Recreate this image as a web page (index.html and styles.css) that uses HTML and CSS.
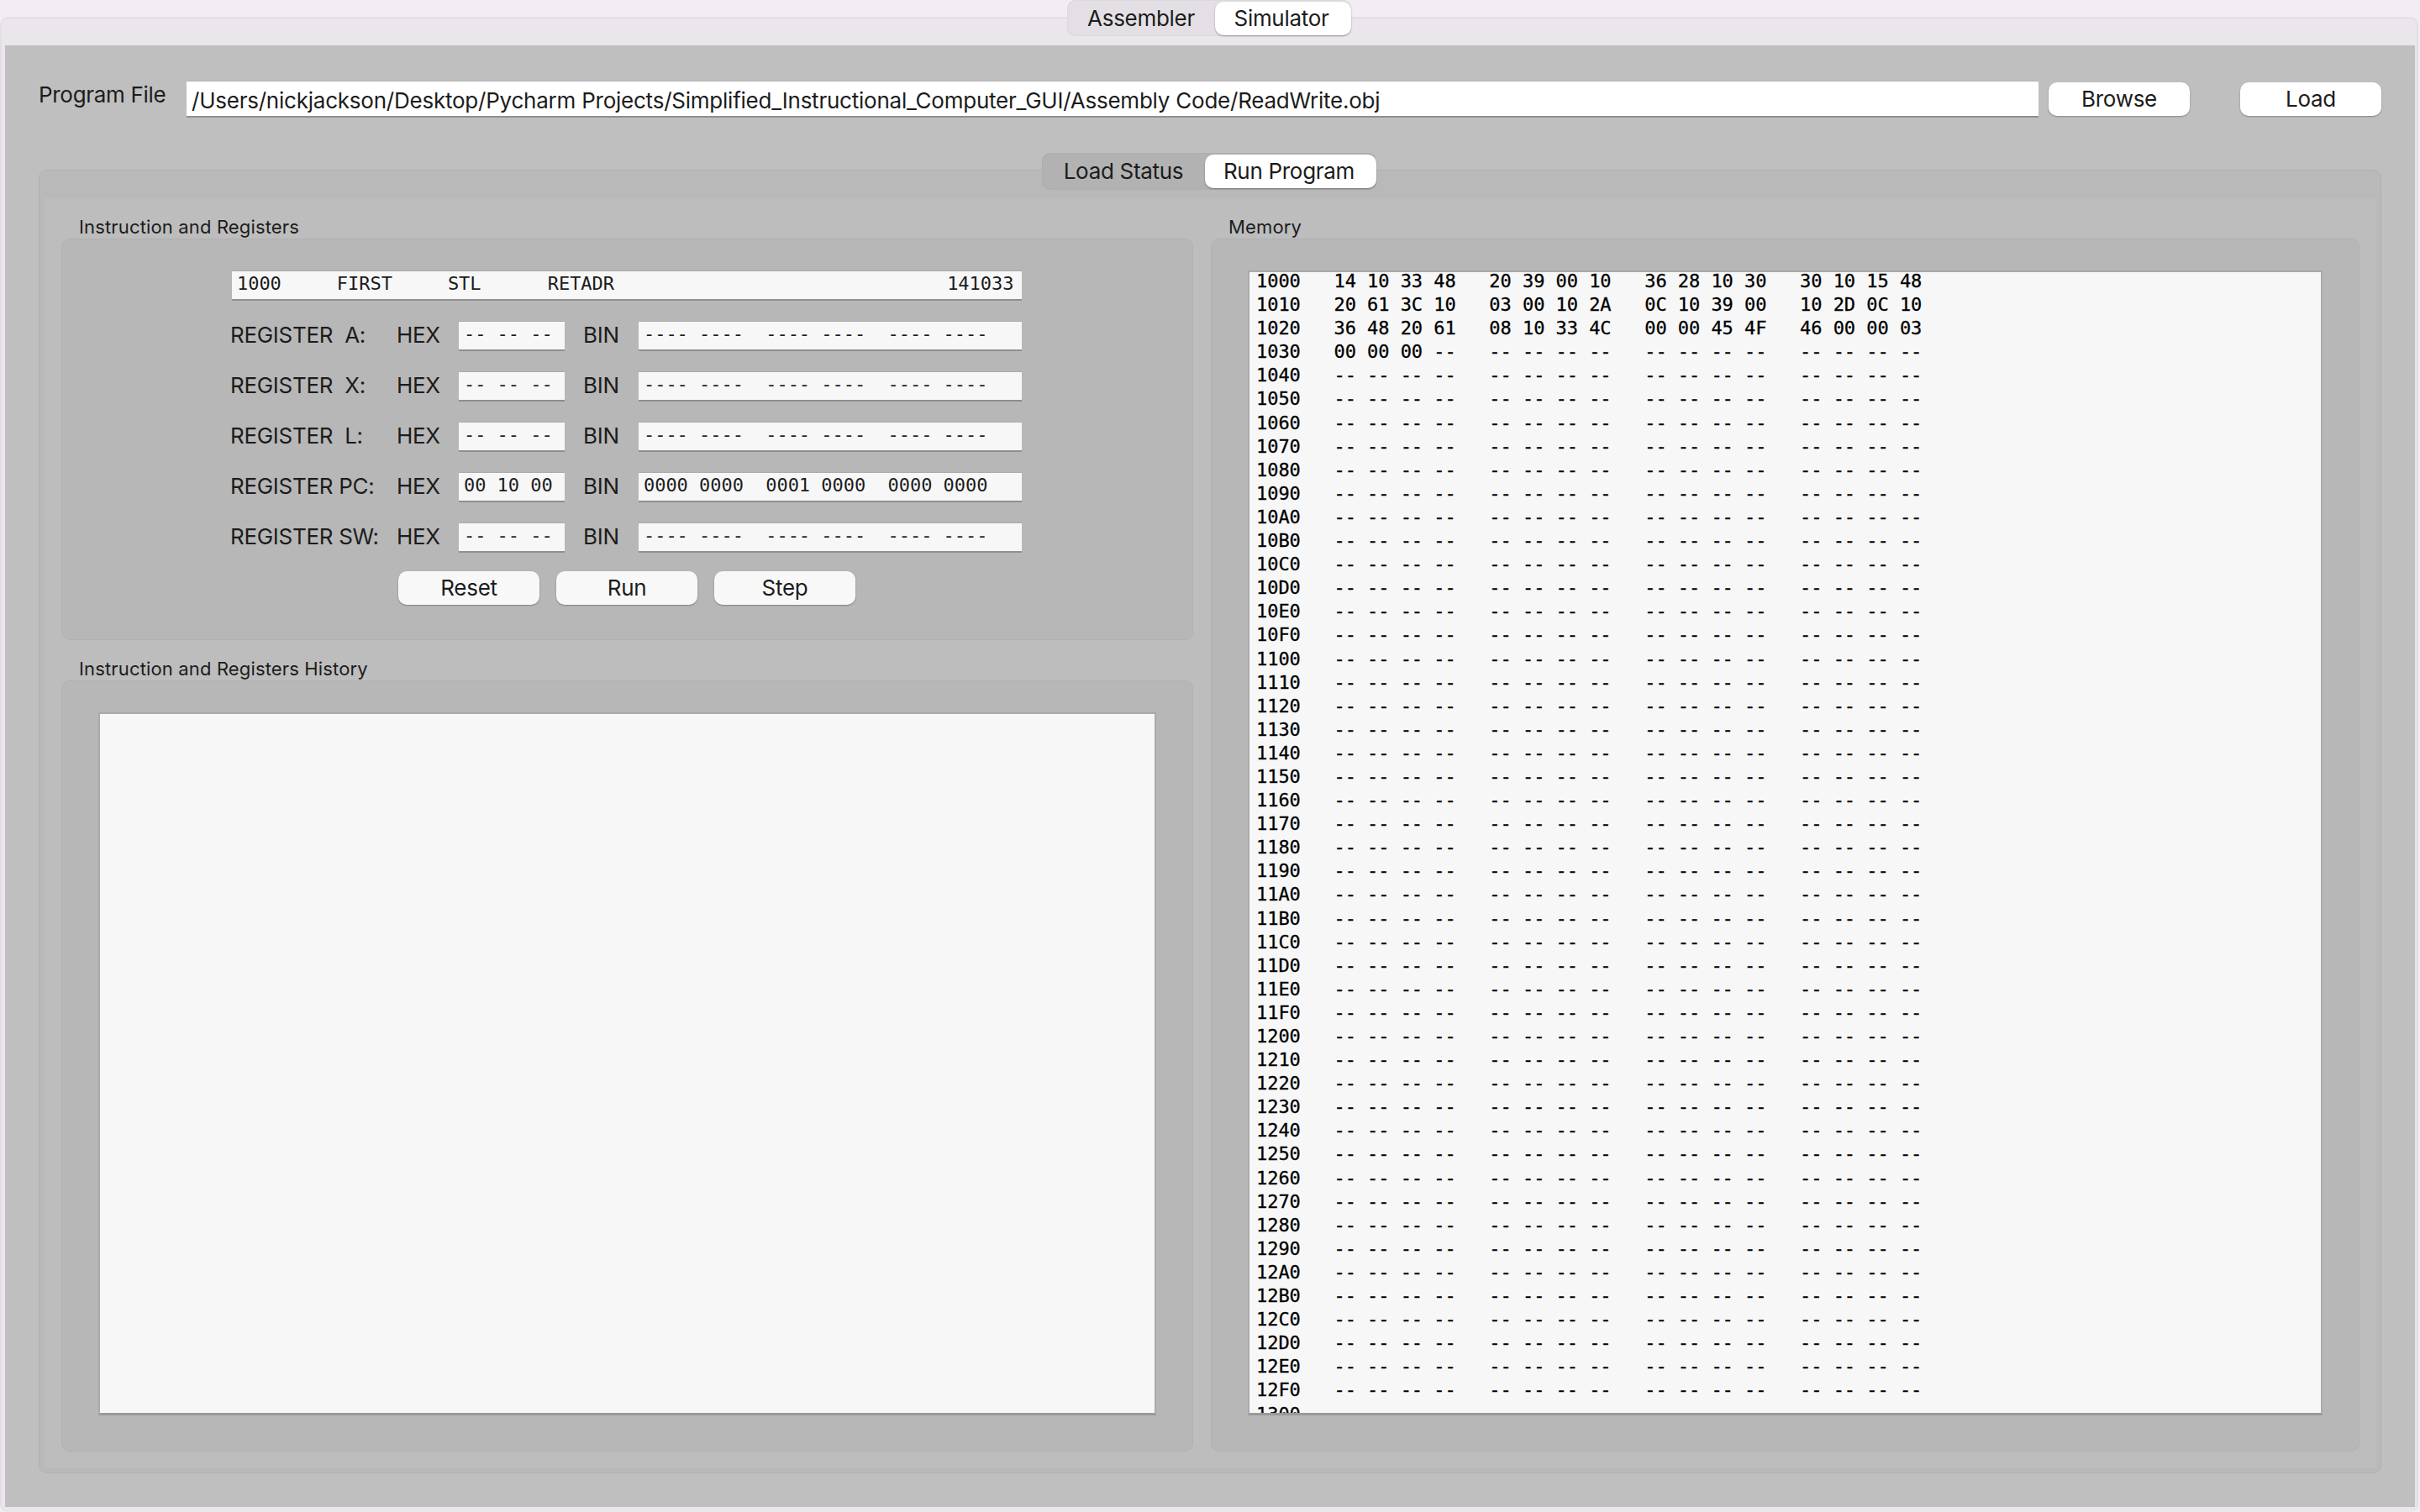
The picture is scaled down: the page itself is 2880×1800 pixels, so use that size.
FILE: index.html
```html
<!DOCTYPE html>
<html lang="en">
<head>
  <meta charset="UTF-8">
  <title>Simplified Instructional Computer</title>
  <link rel="stylesheet" href="styles.css">
</head>
<body>
  <div class="tabs top-tabs">
    <span class="tab">Assembler</span>
    <span class="tab active">Simulator</span>
  </div>
  <div class="frame">
    <div class="pane">
      <div class="file-row">
        <span class="file-label">Program File</span>
        <div class="file-input">/Users/nickjackson/Desktop/Pycharm Projects/Simplified_Instructional_Computer_GUI/Assembly Code/ReadWrite.obj</div>
        <button class="btn browse">Browse</button>
        <button class="btn load">Load</button>
      </div>

      <div class="tabs inner-tabs">
        <span class="tab">Load Status</span>
        <span class="tab active">Run Program</span>
      </div>
      <div class="inner-frame">
        <div class="content">
          <div class="left-col">
            <div class="section-label">Instruction and Registers</div>
            <div class="group registers">
              <div class="reg-inner">
                <div class="field instr">1000     FIRST     STL      RETADR                              141033</div>
                <div class="reg-row">
                  <span class="reg-name">REGISTER  A:</span><span class="reg-unit">HEX</span>
                  <div class="field">-- -- --</div><span class="reg-unit bin">BIN</span>
                  <div class="field">---- ----  ---- ----  ---- ----</div>
                </div>
                <div class="reg-row">
                  <span class="reg-name">REGISTER  X:</span><span class="reg-unit">HEX</span>
                  <div class="field">-- -- --</div><span class="reg-unit bin">BIN</span>
                  <div class="field">---- ----  ---- ----  ---- ----</div>
                </div>
                <div class="reg-row">
                  <span class="reg-name">REGISTER  L:</span><span class="reg-unit">HEX</span>
                  <div class="field">-- -- --</div><span class="reg-unit bin">BIN</span>
                  <div class="field">---- ----  ---- ----  ---- ----</div>
                </div>
                <div class="reg-row">
                  <span class="reg-name">REGISTER PC:</span><span class="reg-unit">HEX</span>
                  <div class="field">00 10 00</div><span class="reg-unit bin">BIN</span>
                  <div class="field">0000 0000  0001 0000  0000 0000</div>
                </div>
                <div class="reg-row">
                  <span class="reg-name">REGISTER SW:</span><span class="reg-unit">HEX</span>
                  <div class="field">-- -- --</div><span class="reg-unit bin">BIN</span>
                  <div class="field">---- ----  ---- ----  ---- ----</div>
                </div>
                <div class="actions">
                  <button class="btn small">Reset</button>
                  <button class="btn small">Run</button>
                  <button class="btn small">Step</button>
                </div>
              </div>
            </div>
            <div class="section-label">Instruction and Registers History</div>
            <div class="group history">
              <div class="text-box"></div>
            </div>
          </div>
          <div class="right-col">
            <div class="section-label">Memory</div>
            <div class="group memory">
              <div class="text-box dump">
<pre class="dump-text">1000   14 10 33 48   20 39 00 10   36 28 10 30   30 10 15 48
1010   20 61 3C 10   03 00 10 2A   0C 10 39 00   10 2D 0C 10
1020   36 48 20 61   08 10 33 4C   00 00 45 4F   46 00 00 03
1030   00 00 00 --   -- -- -- --   -- -- -- --   -- -- -- --
1040   -- -- -- --   -- -- -- --   -- -- -- --   -- -- -- --
1050   -- -- -- --   -- -- -- --   -- -- -- --   -- -- -- --
1060   -- -- -- --   -- -- -- --   -- -- -- --   -- -- -- --
1070   -- -- -- --   -- -- -- --   -- -- -- --   -- -- -- --
1080   -- -- -- --   -- -- -- --   -- -- -- --   -- -- -- --
1090   -- -- -- --   -- -- -- --   -- -- -- --   -- -- -- --
10A0   -- -- -- --   -- -- -- --   -- -- -- --   -- -- -- --
10B0   -- -- -- --   -- -- -- --   -- -- -- --   -- -- -- --
10C0   -- -- -- --   -- -- -- --   -- -- -- --   -- -- -- --
10D0   -- -- -- --   -- -- -- --   -- -- -- --   -- -- -- --
10E0   -- -- -- --   -- -- -- --   -- -- -- --   -- -- -- --
10F0   -- -- -- --   -- -- -- --   -- -- -- --   -- -- -- --
1100   -- -- -- --   -- -- -- --   -- -- -- --   -- -- -- --
1110   -- -- -- --   -- -- -- --   -- -- -- --   -- -- -- --
1120   -- -- -- --   -- -- -- --   -- -- -- --   -- -- -- --
1130   -- -- -- --   -- -- -- --   -- -- -- --   -- -- -- --
1140   -- -- -- --   -- -- -- --   -- -- -- --   -- -- -- --
1150   -- -- -- --   -- -- -- --   -- -- -- --   -- -- -- --
1160   -- -- -- --   -- -- -- --   -- -- -- --   -- -- -- --
1170   -- -- -- --   -- -- -- --   -- -- -- --   -- -- -- --
1180   -- -- -- --   -- -- -- --   -- -- -- --   -- -- -- --
1190   -- -- -- --   -- -- -- --   -- -- -- --   -- -- -- --
11A0   -- -- -- --   -- -- -- --   -- -- -- --   -- -- -- --
11B0   -- -- -- --   -- -- -- --   -- -- -- --   -- -- -- --
11C0   -- -- -- --   -- -- -- --   -- -- -- --   -- -- -- --
11D0   -- -- -- --   -- -- -- --   -- -- -- --   -- -- -- --
11E0   -- -- -- --   -- -- -- --   -- -- -- --   -- -- -- --
11F0   -- -- -- --   -- -- -- --   -- -- -- --   -- -- -- --
1200   -- -- -- --   -- -- -- --   -- -- -- --   -- -- -- --
1210   -- -- -- --   -- -- -- --   -- -- -- --   -- -- -- --
1220   -- -- -- --   -- -- -- --   -- -- -- --   -- -- -- --
1230   -- -- -- --   -- -- -- --   -- -- -- --   -- -- -- --
1240   -- -- -- --   -- -- -- --   -- -- -- --   -- -- -- --
1250   -- -- -- --   -- -- -- --   -- -- -- --   -- -- -- --
1260   -- -- -- --   -- -- -- --   -- -- -- --   -- -- -- --
1270   -- -- -- --   -- -- -- --   -- -- -- --   -- -- -- --
1280   -- -- -- --   -- -- -- --   -- -- -- --   -- -- -- --
1290   -- -- -- --   -- -- -- --   -- -- -- --   -- -- -- --
12A0   -- -- -- --   -- -- -- --   -- -- -- --   -- -- -- --
12B0   -- -- -- --   -- -- -- --   -- -- -- --   -- -- -- --
12C0   -- -- -- --   -- -- -- --   -- -- -- --   -- -- -- --
12D0   -- -- -- --   -- -- -- --   -- -- -- --   -- -- -- --
12E0   -- -- -- --   -- -- -- --   -- -- -- --   -- -- -- --
12F0   -- -- -- --   -- -- -- --   -- -- -- --   -- -- -- --
1300   -- -- -- --   -- -- -- --   -- -- -- --   -- -- -- --</pre>
              </div>
            </div>
          </div>
        </div>
      </div>
    </div>
  </div>
</body>
</html>
```

FILE: styles.css
```css
html, body {
  margin: 0;
  padding: 0;
  height: 1800px;
  overflow: hidden;
}
body {
  box-sizing: border-box;
  padding-right: 2px;
  background-color: #f2edf3;
  color: #1c1c1c;
  font-family: Inter, sans-serif;
  font-size: 26px;
  letter-spacing: -0.3px;
}

/* segmented tabs */
.tabs {
  display: flex;
  width: max-content;
  margin-left: auto;
  margin-right: auto;
  position: relative;
  z-index: 2;
  border-radius: 10px;
  box-sizing: border-box;
  padding-top: 2px;
}
.tab {
  display: flex;
  align-items: center;
  justify-content: center;
  box-sizing: border-box;
  height: 40px;
  padding-bottom: 2px;
  border-radius: 10px;
}
.tab.active {
  padding-right: 4px;
  background-color: #ffffff;
  box-shadow: 0 1px 2px rgba(0, 0, 0, 0.35);
}
.top-tabs {
  height: 43px;
  margin-bottom: -23px;
  background-color: #e3dfe5;
  box-shadow: inset 0 0 0 1px #dcd8de;
}
.top-tabs .tab {
  width: 176px;
}
.top-tabs .tab.active {
  width: 162px;
}
.inner-tabs {
  height: 44px;
  margin-top: -20px;
  margin-bottom: -24px;
  margin-left: 1194px;
  background-color: #b2b2b2;
  box-shadow: inset 0 0 0 1px #adadad;
}
.inner-tabs .tab {
  width: 194px;
}
.inner-tabs .tab.active {
  width: 204px;
}

/* outer frame */
.frame {
  box-sizing: border-box;
  height: 1780px;
  padding: 32px 2px 6px 4px;
  background-color: #eae6ec;
  border: 2px solid #e2dee4;
  border-bottom-width: 0;
  border-radius: 10px;
}
.pane {
  box-sizing: border-box;
  height: 1740px;
  padding: 42px 40px 40px 40px;
  background-color: #bfbfbf;
}

/* program file row */
.file-row {
  display: flex;
  align-items: flex-start;
  height: 44px;
  margin-bottom: 62px;
}
.file-label {
  width: 176px;
  line-height: 34px;
}
.file-input {
  box-sizing: border-box;
  width: 2204px;
  height: 44px;
  padding-left: 6px;
  line-height: 45px;
  letter-spacing: -0.23px;
  background-color: #ffffff;
  border-top: 1px solid #b0b0b0;
  border-bottom: 2px solid #8f8f8f;
}
.btn {
  box-sizing: border-box;
  width: 168px;
  height: 40px;
  padding: 0 0 2px 0;
  margin-top: 2px;
  border: 0;
  border-radius: 10px;
  background-color: #ffffff;
  box-shadow: 0 1px 2px rgba(0, 0, 0, 0.3);
  color: #1c1c1c;
  font-family: Inter, sans-serif;
  font-size: 26px;
  letter-spacing: -0.3px;
}
.browse {
  margin-left: 12px;
}
.load {
  margin-left: 60px;
}

/* inner tab area */
.inner-frame {
  box-sizing: border-box;
  height: 1552px;
  padding: 33px 5px 5px 5px;
  background-color: #b9b9b9;
  border: 1px solid #b1b1b1;
  border-radius: 10px;
}
.content {
  display: grid;
  grid-template-columns: 1347px 1367px;
  grid-template-rows: minmax(0, 1fr);
  column-gap: 21px;
  height: 1512px;
  padding: 0 20px 20px 21px;
  box-sizing: border-box;
  background-color: #bdbdbd;
}
.left-col, .right-col {
  display: flex;
  flex-direction: column;
  min-height: 0;
}
.section-label {
  box-sizing: border-box;
  height: 48px;
  padding: 23px 0 0 21px;
  font-size: 22px;
  line-height: 23px;
  letter-spacing: 0.15px;
}
.group {
  box-sizing: border-box;
  background-color: #b7b7b7;
  border: 1px solid #b1b1b1;
  border-radius: 10px;
}

/* registers */
.registers {
  height: 478px;
  padding-top: 37px;
}
.reg-inner {
  width: 940px;
  margin-left: 202px;
}
.field {
  box-sizing: border-box;
  height: 36px;
  padding: 2px 0 0 6px;
  background-color: #f7f7f7;
  border-top: 1px solid #aaaaaa;
  border-bottom: 2px solid #8f8f8f;
  font-family: "DejaVu Sans Mono", monospace;
  font-size: 22px;
  line-height: 26px;
  letter-spacing: -0.04px;
  white-space: pre;
}
.reg-row {
  display: grid;
  grid-template-columns: 197px 73px 126px 88px 456px;
  align-items: center;
  margin-top: 24px;
}
.reg-name {
  margin-left: -2px;
  padding-bottom: 3px;
  white-space: pre;
}
.reg-unit {
  margin-left: -1px;
  padding-bottom: 3px;
}
.reg-unit.bin {
  padding-left: 23px;
}
.actions {
  display: flex;
  justify-content: center;
  gap: 20px;
  margin-top: 22px;
}
.btn.small {
  margin-top: 0;
  background-color: #f8f8f8;
}

/* history and memory */
.history, .memory {
  flex: 1;
  min-height: 0;
  padding: 37px 43px 42px 43px;
}
.text-box {
  box-sizing: border-box;
  height: 100%;
  background-color: #f7f7f7;
  border: 2px solid #aaaaaa;
  border-bottom: 3px solid #9a9a9a;
}
.dump {
  overflow: hidden;
  padding-left: 8px;
}
.dump-text {
  margin: -3px 0 0 0;
  color: #000000;
  font-family: "DejaVu Sans Mono", monospace;
  font-size: 22px;
  line-height: 28.1px;
  letter-spacing: -0.04px;
  -webkit-text-stroke: 0.3px #000000;
}
```
